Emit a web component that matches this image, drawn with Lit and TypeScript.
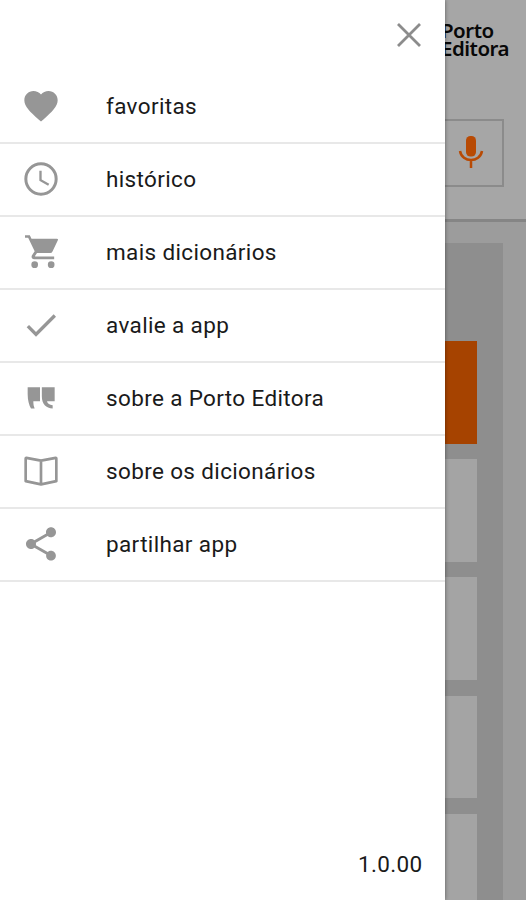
import { LitElement, html, css, svg } from "lit";
import { customElement } from "lit/decorators.js";

const icons = {
  heart: svg`<path d="M12 21.35l-1.45-1.32C5.4 15.36 2 12.28 2 8.5 2 5.42 4.42 3 7.5 3c1.74 0 3.41.81 4.5 2.09C13.09 3.81 14.76 3 16.5 3 19.58 3 22 5.42 22 8.5c0 3.78-3.4 6.86-8.55 11.54L12 21.35z"/>`,
  clock: svg`<circle cx="12" cy="12" r="9.1" fill="none" stroke="currentColor" stroke-width="1.8"/><path d="M12.4 7H11v6l5.25 3.05.7-1.15-4.55-2.6z"/>`,
  cart: svg`<path d="M2.4 1.9H5.3L6.3 4H21.5Q22.5 4.1 22.1 5L18.9 11.7Q18.5 12.6 17.5 12.6H9.6L8.4 14.4Q8.4 14.7 8.8 14.7H19.9V16.3H7.9C6.5 16.3 6 15 6.6 14L8.2 11.6 4.3 3.5H2.4z"/><circle cx="8.2" cy="19.6" r="2"/><circle cx="18.1" cy="19.6" r="2"/>`,
  check: svg`<path d="M9 16.17L4.83 12l-1.42 1.41L9 19 21 7l-1.41-1.41z"/>`,
  quote: svg`<path d="M4 5.6H11.4V14H7.4C7.4 15.8 7.6 17 8.2 18.3H6C4.8 16.4 4 13.2 4 9.8zM12.5 5.6H20.2V14H15.6C16 15.5 17.1 16.2 19 16.3V18.3C15 18.3 12.5 15.6 12.5 11z"/>`,
  book: svg`<path fill="none" stroke="currentColor" stroke-width="1.6" stroke-linejoin="round" d="M12 5.8L3.2 4.1Q2.8 4.1 2.8 4.5V18.1L12 20 21.2 18.1V4.5Q21.2 4.1 20.8 4.1L12 5.8V20"/>`,
  share: svg`<path d="M18 16.08c-.76 0-1.44.3-1.96.77L8.91 12.7c.05-.23.09-.46.09-.7s-.04-.47-.09-.7l7.05-4.11c.54.5 1.25.81 2.04.81 1.66 0 3-1.34 3-3s-1.34-3-3-3-3 1.34-3 3c0 .24.04.47.09.7L8.04 9.81C7.5 9.31 6.79 9 6 9c-1.66 0-3 1.34-3 3s1.34 3 3 3c.79 0 1.5-.31 2.04-.81l7.12 4.16c-.05.21-.08.43-.08.65 0 1.61 1.31 2.92 2.92 2.92s2.92-1.31 2.92-2.92-1.31-2.92-2.92-2.92z"/>`,
};

const entries = [
  { icon: icons.heart, label: "favoritas" },
  { icon: icons.clock, label: "histórico" },
  { icon: icons.cart, label: "mais dicionários" },
  { icon: icons.check, label: "avalie a app" },
  { icon: icons.quote, label: "sobre a Porto Editora" },
  { icon: icons.book, label: "sobre os dicionários" },
  { icon: icons.share, label: "partilhar app" },
];

@customElement("side-drawer")
export class SideDrawer extends LitElement {
  static styles = css`
    :host {
      display: flex;
      flex-direction: column;
      box-sizing: border-box;
      background: #fff;
      color: #1a1a1a;
      font: 22.5px/30px Roboto, sans-serif;
      letter-spacing: 0.36px;
    }
    .top {
      display: flex;
      justify-content: flex-end;
      align-items: center;
      height: 71px;
      box-sizing: border-box;
      padding: 0 24px 1px 0;
      color: #8c8c8c;
    }
    .close {
      width: 24px;
      height: 24px;
    }
    nav {
      display: flex;
      flex-direction: column;
    }
    .row {
      display: flex;
      align-items: center;
      box-sizing: border-box;
      height: 73px;
      padding: 0 0 1px 21px;
      gap: 45px;
      border-bottom: 2px solid #e8e8e8;
    }
    .icon {
      width: 40px;
      height: 40px;
      flex: none;
      color: #969696;
      fill: currentColor;
    }
    .version {
      margin-top: auto;
      padding: 0 22px 21px 0;
      text-align: right;
    }
  `;

  render() {
    return html`
      <div class="top">
        <svg class="close" viewBox="0 0 24 24" fill="none" stroke="currentColor" stroke-width="2.8">
          <path d="M1 1L23 23M23 1L1 23" />
        </svg>
      </div>
      <nav>
        ${entries.map(
          (e) => html`<div class="row">
            <svg class="icon" viewBox="0 0 24 24">${e.icon}</svg>
            <span>${e.label}</span>
          </div>`
        )}
      </nav>
      <div class="version">1.0.00</div>
    `;
  }
}

@customElement("app-root")
export class AppRoot extends LitElement {
  static styles = css`
    :host {
      display: block;
      position: relative;
      height: 900px;
      overflow: hidden;
      background: #9c9c9c;
    }
    .page {
      display: flex;
      flex-direction: column;
      height: 100%;
    }
    header {
      display: flex;
      flex-direction: column;
      align-items: flex-end;
      box-sizing: border-box;
      height: 222px;
      flex: none;
      background: #a6a6a6;
      border-bottom: 3px solid #858585;
    }
    .brand {
      width: 85px;
      margin: 21px 0 0;
      font: 600 20.5px/18px "Noto Sans", sans-serif;
      letter-spacing: -0.5px;
      color: #080808;
      white-space: nowrap;
    }
    .search {
      display: flex;
      align-items: center;
      justify-content: flex-end;
      box-sizing: border-box;
      width: 480px;
      height: 68px;
      margin: 62px 22px 0 0;
      padding: 0 18px 2px 0;
      border: 2px solid #8b8b8b;
    }
    .mic {
      width: 26px;
      height: 34px;
    }
    .panel {
      flex: 1;
      display: flex;
      flex-direction: column;
      gap: 15.5px;
      margin: 21px 23px 0;
      padding: 98px 26px 0;
      background: #8e8e8e;
    }
    .card {
      height: 102.7px;
      flex: none;
      background: #a4a4a4;
    }
    .card.active {
      background: #a64300;
    }
    side-drawer {
      position: absolute;
      top: 0;
      left: 0;
      bottom: 0;
      width: 444.5px;
      box-shadow: 0 0 4px rgba(0, 0, 0, 0.45);
    }
  `;

  render() {
    return html`
      <div class="page">
        <header>
          <div class="brand">
            <div>Porto</div>
            <div>Editora</div>
          </div>
          <div class="search">
            <svg class="mic" viewBox="0 0 26 34">
              <rect x="8" y="1" width="10" height="20.5" rx="4.5" fill="#b84a04" />
              <path d="M2 16C4 28 22 28 24 16M13 25V33" fill="none" stroke="#b84a04" stroke-width="2.5" />
            </svg>
          </div>
        </header>
        <div class="panel">
          <div class="card active"></div>
          <div class="card"></div>
          <div class="card"></div>
          <div class="card"></div>
          <div class="card"></div>
        </div>
      </div>
      <side-drawer></side-drawer>
    `;
  }
}
